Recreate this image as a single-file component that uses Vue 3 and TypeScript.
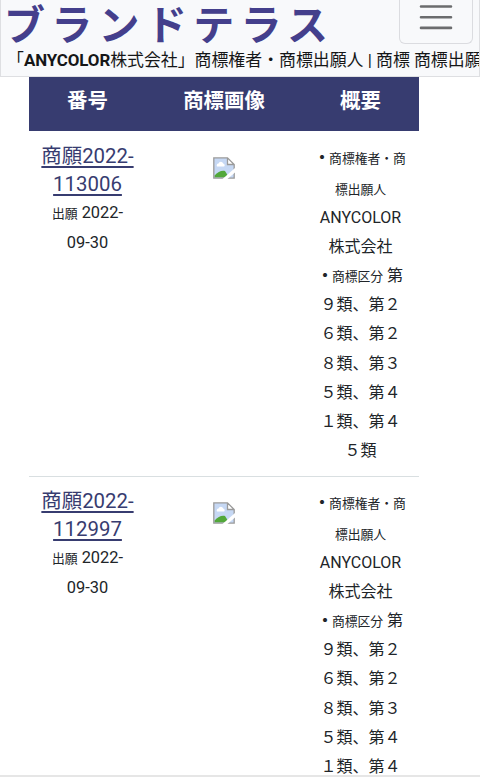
<script setup lang="ts">
interface TrademarkLine {
  mark?: boolean;
  small?: string;
  text?: string;
}

interface Trademark {
  id: string;
  numberLines: string[];
  dateLines: TrademarkLine[];
  summary: TrademarkLine[];
}

const siteName = 'ブランドテラス';
const columns = ['番号', '商標画像', '概要'];

const summary: TrademarkLine[] = [
  { mark: true, small: '商標権者・商' },
  { small: '標出願人' },
  { text: 'ANYCOLOR' },
  { text: '株式会社' },
  { mark: true, small: '商標区分', text: ' 第' },
  { text: '９類、第２' },
  { text: '６類、第２' },
  { text: '８類、第３' },
  { text: '５類、第４' },
  { text: '１類、第４' },
  { text: '５類' },
];

const dateLines: TrademarkLine[] = [{ small: '出願', text: ' 2022-' }, { text: '09-30' }];

const trademarks: Trademark[] = [
  { id: '2022-113006', numberLines: ['商願2022-', '113006'], dateLines, summary },
  { id: '2022-112997', numberLines: ['商願2022-', '112997'], dateLines, summary },
];
</script>

<template>
  <div class="page">
    <header class="navbar">
      <div class="navbar__top">
        <a class="brand">{{ siteName }}</a>
        <button class="toggler" type="button" aria-label="menu">
          <svg width="34" height="34" viewBox="0 0 34 34">
            <path d="M2 6.5h30M2 17.2h30M2 27.9h30" stroke="#6b6c6e" stroke-width="2.6" stroke-linecap="round" />
          </svg>
        </button>
      </div>
      <p class="navbar__title">「<b>ANYCOLOR</b>株式会社」商標権者・商標出願人 | 商標 商標出願</p>
    </header>

    <main class="table">
      <div class="table__row table__row--head">
        <div v-for="column in columns" :key="column" class="table__heading">{{ column }}</div>
      </div>

      <div v-for="item in trademarks" :key="item.id" class="table__row">
        <div class="number">
          <a class="number__link">
            <span v-for="line in item.numberLines" :key="line" class="number__line">{{ line }}</span>
          </a>
          <div v-for="(line, i) in item.dateLines" :key="i" class="line line--date">
            <small v-if="line.small">{{ line.small }}</small>{{ line.text }}
          </div>
        </div>

        <div class="image">
          <svg class="image__icon" width="22" height="22" viewBox="0 0 22 22">
            <path d="M1 1h13.5l6.5 6.5V21H1z" fill="#c6d8f4" />
            <path d="M4 9.5a2 2 0 0 1 1.5-3 2.5 2.5 0 0 1 4.7 0 1.8 1.8 0 0 1 1 3z" fill="#fff" />
            <path d="M1.5 20.5v-2C5 15 8.5 13 12 14l4 6.5z" fill="#52a83a" />
            <path d="M14.5 1v6.5H21z" fill="#fff" />
            <path d="M.8.8h13.7l6.7 6.7v13.7H.8zM14.5.8v6.7h6.7" fill="none" stroke="#9a9a9a" stroke-width="1.3" />
            <path d="M9.5 22 22 11v4.5L14.5 22z" fill="#fff" />
          </svg>
        </div>

        <div class="summary">
          <div v-for="(line, i) in item.summary" :key="i" class="line">
            <span v-if="line.mark" class="line__mark">・</span><small v-if="line.small">{{ line.small }}</small>{{ line.text }}
          </div>
        </div>
      </div>
    </main>
    <div class="bottom-edge"></div>
  </div>
</template>

<style>
body {
  margin: 0;
  overflow: hidden;
  background: #fff;
}
</style>

<style scoped>
.page {
  display: flex;
  flex-direction: column;
  width: 480px;
  height: 777px;
  overflow: hidden;
  color: #212529;
  font-family: Roboto, 'Noto Sans CJK JP', sans-serif;
  font-size: 16px;
}

.navbar {
  box-sizing: border-box;
  flex: none;
  height: 77px;
  border: 1px solid #dedfe2;
  border-top: 0;
  background: #f8f9fb;
  overflow: hidden;
}

.navbar__top {
  display: flex;
  justify-content: space-between;
  height: 45px;
  padding: 0 6px 0 3px;
}

.brand {
  color: #443f8c;
  font-family: 'Noto Sans CJK JP', sans-serif;
  font-size: 41px;
  font-weight: 700;
  line-height: 45px;
  letter-spacing: 6.3px;
  white-space: nowrap;
}

.toggler {
  display: flex;
  align-items: flex-start;
  justify-content: center;
  box-sizing: border-box;
  width: 74px;
  height: 44px;
  padding: 0;
  border: 1px solid #dbdce0;
  border-top: 0;
  border-radius: 0 0 6px 6px;
  background: transparent;
}

.navbar__title {
  margin: 0;
  padding-left: 6px;
  color: #151617;
  font-size: 16.9px;
  line-height: 30px;
  white-space: nowrap;
}

.navbar__title b {
  letter-spacing: -0.1px;
}

.table {
  flex: 1;
  min-height: 0;
  width: 390px;
  margin-left: 29px;
  overflow: hidden;
}

.table__row {
  display: grid;
  grid-template-columns: 117px 156px 117px;
  box-sizing: border-box;
  height: 345px;
  padding-top: 11px;
  border-top: 1px solid #d9dfe1;
  text-align: center;
}

.table__row--head {
  height: 54px;
  padding-top: 9px;
  border-top: 0;
  background: #373c70;
  color: #fff;
}

.table__row--head + .table__row {
  border-top-color: transparent;
}

.table__heading {
  font-size: 20.4px;
  font-weight: 700;
  line-height: 30px;
}

.number__link {
  color: #373c70;
  font-size: 20.4px;
  line-height: 27.7px;
}

.number__line {
  display: block;
  text-decoration: underline;
  text-decoration-thickness: 1.5px;
  text-underline-offset: 3px;
}

.line {
  height: 29.2px;
  line-height: 29.2px;
  white-space: nowrap;
}

.line--date {
  font-size: 16.4px;
}

.summary .line:first-child {
  height: 30.5px;
}

.line small {
  font-size: 12.8px;
}

.line__mark {
  margin-right: -1px;
  margin-left: -1px;
  font-weight: 700;
}

.image__icon {
  display: block;
  margin: 14px auto 0;
}

.bottom-edge {
  flex: none;
  height: 2px;
  background: #e6e6e6;
}
</style>
